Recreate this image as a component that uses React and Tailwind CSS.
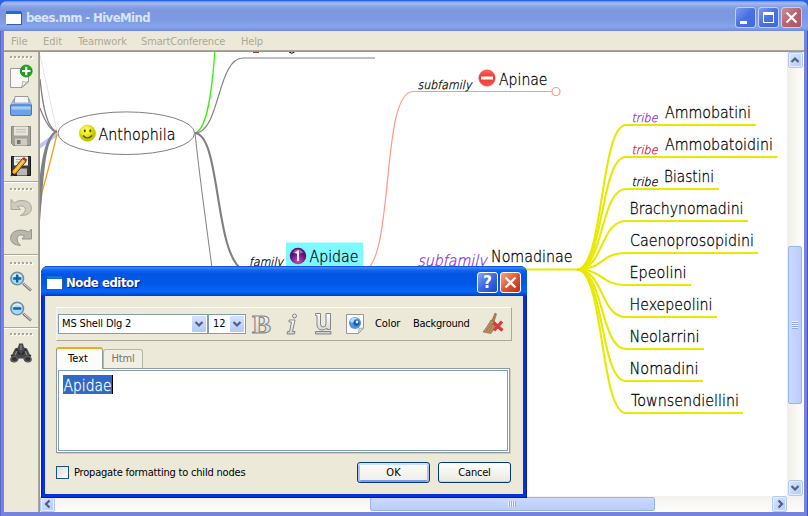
import React from "react";

const TRIBES = [
  { name: "Ammobatini", x: 665, w: 86, y: 125, end: 756, tag: "#8a2be2" },
  { name: "Ammobatoidini", x: 665, w: 108, y: 157, end: 777.5, tag: "#dc143c" },
  { name: "Biastini", x: 664, w: 50, y: 189, end: 719, tag: "#000" },
  { name: "Brachynomadini", x: 629.5, w: 114, y: 221, end: 748 },
  { name: "Caenoprosopidini", x: 630, w: 124, y: 253, end: 758 },
  { name: "Epeolini", x: 629.5, w: 57, y: 285, end: 691 },
  { name: "Hexepeolini", x: 629.5, w: 83, y: 317, end: 717 },
  { name: "Neolarrini", x: 629.5, w: 70, y: 349, end: 704 },
  { name: "Nomadini", x: 629.5, w: 69, y: 381, end: 703 },
  { name: "Townsendiellini", x: 631, w: 108, y: 413, end: 743 },
];

function Label({ x, y, w, size = 16.5, color = "#000", italic, children }) {
  return (
    <text
      x={x}
      y={y}
      fontSize={size}
      fill={color}
      stroke={color}
      strokeWidth={0.3}
      fontStyle={italic ? "italic" : "normal"}
      textLength={w}
      lengthAdjust="spacingAndGlyphs"
    >
      {children}
    </text>
  );
}

function MindMap() {
  return (
    <svg
      className="block h-[444px] w-[747px] shrink-0 font-['DejaVu_Sans_Light','DejaVu_Sans',sans-serif] [font-stretch:normal] font-extralight"
      viewBox="40 52 747 444"
    >
      <defs>
        <radialGradient id="smile" cx="40%" cy="30%">
          <stop offset="0" stopColor="#ffff70" />
          <stop offset="0.7" stopColor="#e8e810" />
          <stop offset="1" stopColor="#c4c400" />
        </radialGradient>
        <radialGradient id="info" cx="50%" cy="80%">
          <stop offset="0" stopColor="#c653c9" />
          <stop offset="1" stopColor="#5c0f78" />
        </radialGradient>
        <linearGradient id="stop" x2="0" y2="1">
          <stop offset="0" stopColor="#ff6a62" />
          <stop offset="0.45" stopColor="#e83a34" />
          <stop offset="1" stopColor="#ff5148" />
        </linearGradient>
      </defs>
      <g fill="none">
        <path d="M40 55 L57 132" stroke="#e4e4e4" />
        <path d="M40 79C43 108 47 128 57 132" stroke="#808080" strokeWidth="1.3" />
        <path d="M40 108C45 122 50 130 57 133" stroke="#808080" strokeWidth="1.2" />
        <path d="M39 147L57 134" stroke="#c3c3fd" strokeWidth="4" />
        <path d="M57 134C52 155 47 175 42 192L40 208" stroke="#f0a018" strokeWidth="1.3" />
        <path d="M57 131C44 138 43 175 39 225L39 195C41 165 45 136 57 131Z" fill="#808080" stroke="#808080" strokeWidth="1.5" />
        <ellipse cx="126.3" cy="133.2" rx="68.3" ry="21.3" fill="#fff" stroke="#808080" />
        <path d="M195 133C207 130 212 92 215 50" stroke="#3cec18" strokeWidth="1.3" />
        <path d="M195 133C220 133 217 58 243 58H375" stroke="#808080" strokeWidth="1.2" />
        <path d="M195 133C221 135 214 255 243 270" stroke="#808080" strokeWidth="2.1" />
        <path d="M195 133C199 172 207 230 212 268" stroke="#808080" />
        <path d="M366 270C394 254 381 91.5 413 91.5H551.5" stroke="#ff9a80" strokeWidth="1.2" />
        <circle cx="556" cy="91.5" r="4" stroke="#ff9a80" strokeWidth="1.2" />
        <g stroke="#e8e800" strokeWidth="2.1">
          <path d="M520 269.5H580" />
          {TRIBES.map((t) => (
            <path key={t.name} d={`M577 269.5C604 269.5 600 ${t.y} 626 ${t.y}H${t.end}`} />
          ))}
        </g>
      </g>
      {TRIBES.map((t) => (
        <g key={t.name}>
          <Label x={t.x} y={t.y - 7} w={t.w}>{t.name}</Label>
          {t.tag && (
            <Label x={631.5} y={t.y - 3} w={26} size={12} color={t.tag} italic>tribe</Label>
          )}
        </g>
      ))}
      <circle cx="87.5" cy="133.3" r="8.2" fill="url(#smile)" stroke="#c9c900" strokeWidth=".5" />
      <ellipse cx="84.8" cy="130.7" rx="1" ry="1.5" fill="#4a4a20" />
      <ellipse cx="90.4" cy="130.7" rx="1" ry="1.5" fill="#4a4a20" />
      <path d="M83 135.5Q87.5 140.5 92 135.5" fill="none" stroke="#4a4a20" strokeWidth="1.2" />
      <Label x={98.5} y={140} w={77}>Anthophila</Label>
      <rect x="286" y="242.5" width="77" height="28" fill="#7df9ff" />
      <circle cx="298" cy="256" r="8.2" fill="url(#info)" />
      <path d="M292.5 252.5Q298 246 303.5 252.5Q298 255 292.5 252.5Z" fill="#c890d4" opacity=".6" />
      <path d="M295.6 253L298 251.5V261" fill="none" stroke="#fff" strokeWidth="1.8" />
      <Label x={309.5} y={262} w={49}>Apidae</Label>
      <Label x={249} y={265.5} w={34} size={12} italic>family</Label>
      <Label x={417.5} y={88.5} w={54} size={12} italic>subfamily</Label>
      <Label x={417.5} y={265.5} w={69} size={15.5} color="#8a2be2" italic>subfamily</Label>
      <circle cx="487" cy="78" r="8.2" fill="url(#stop)" stroke="#e04038" strokeWidth=".5" />
      <rect x="481" y="76.5" width="12" height="3" fill="#fff" />
      <Label x={499} y={85} w={48.5}>Apinae</Label>
      <Label x={491} y={262} w={81.5}>Nomadinae</Label>
      <path d="M253 52.3H259" stroke="#7a3a28" strokeWidth="1.3" />
      <path d="M289 52Q292 54.5 294.5 52" fill="none" stroke="#000" />
    </svg>
  );
}

function Icon({ children }) {
  return (
    <div className="flex h-[30px] items-center justify-center">
      <svg width="24" height="24" viewBox="0 0 24 24" fill="none">{children}</svg>
    </div>
  );
}

function Handle() {
  return (
    <div className="flex h-[9px] items-center gap-px pl-[6px]">
      {[0, 1, 2, 3, 4, 5].map((i) => (
        <i key={i} className="mr-px h-[2px] w-[2px] bg-[#a8a595] shadow-[1px_1px_0_#fff]" />
      ))}
    </div>
  );
}

function Rule() {
  return <div className="h-[2px] border-b border-white bg-[#aca899]" />;
}

function Magnifier({ plus }) {
  return (
    <Icon>
      <path d="M14 13.5L22 20.5" stroke="#777" strokeWidth="2.6" />
      <path d="M14.5 13.5L21.8 20" stroke="#e8e8e8" strokeWidth="1" />
      <circle cx="8.2" cy="8.5" r="6.3" fill="#a9d8f5" stroke="#6d91a3" strokeWidth="1.6" />
      <path d="M4 6.5Q8 2 12.5 6.5" stroke="#e0f4ff" strokeWidth="1.5" />
      <path d={plus ? "M4.2 8.5H12.2M8.2 4.5V12.5" : "M4.2 8.5H12.2"} stroke="#10619f" strokeWidth="2.4" />
    </Icon>
  );
}

function ToolColumn() {
  return (
    <div className="flex w-[34px] shrink-0 flex-col bg-[#ece9d8]">
      <Handle />
      <Icon>
        <path d="M1.5 4.5H19.500V18L13 23.500H1.5Z" fill="#f8f8f8" stroke="#9b9b9b" />
        <path d="M12.5 23Q14.500 19 13.500 17.500Q16 19 19.500 17.500Z" fill="#fff" stroke="#999" strokeWidth=".8" />
        <circle cx="17.2" cy="7" r="6" fill="#18a818" stroke="#0c7c10" strokeWidth=".7" />
        <path d="M13 7H21.400M17.2 2.800V11.200" stroke="#fff" strokeWidth="2.200" />
      </Icon>
      <Icon>
        <path d="M5 10L6 2.500H19L20.500 10" fill="#f6f6f6" stroke="#999" />
        <path d="M5 5L2 10.500H22.500L20 5V9H5Z" fill="#a8c8ec" stroke="#6f9bd0" strokeWidth=".7" />
        <path d="M1.500 11H22.500V20Q22.500 21.500 21 21.500H3Q1.500 21.500 1.500 20Z" fill="#6ba4e6" stroke="#3d79c4" />
        <path d="M2.500 12.500H21.500V15.500H2.500Z" fill="#a5cbf5" />
      </Icon>
      <Icon>
        <path d="M2.500 2.500H21.500V21.500H4.500L2.500 19.500Z" fill="#a3a198" stroke="#858379" />
        <path d="M5 2.500H19V11.500H5Z" fill="#e6e4da" />
        <path d="M7 5.500H17M7 8H17" stroke="#c0beb4" />
        <path d="M6 14.500H18V21.500H6Z" fill="#ceccc2" />
        <path d="M8 16H11.500V20H8Z" fill="#77756d" />
      </Icon>
      <Icon>
        <path d="M2.500 2.500H21.500V21.500H4.500L2.500 19.500Z" fill="#3c3c3c" stroke="#151515" />
        <path d="M5 2.500H19V11.500H5Z" fill="#ececec" />
        <path d="M7 5.500H17M7 8H17" stroke="#aaa" />
        <path d="M8 14.500H18V21.500H8Z" fill="#b8b8b8" />
        <path d="M2 22L3.500 16.500L13.500 4.500L17 7.500L7 19.500Z" fill="#f2ae27" stroke="#5e3808" />
        <path d="M5.500 17.500L15.300 6" stroke="#ffe27a" />
        <path d="M13.500 4.500L15 3L18.300 5.800L17 7.500Z" fill="#c8281e" />
        <path d="M2 22L3 18.500L5.500 20.500Z" fill="#111" />
      </Icon>
      <Rule />
      <div className="pt-px"><Handle /></div>
      <Icon>
        <path d="M2 3.500V13.500H11.500L8.500 10.500Q16 8.500 16.500 13.500Q16.500 17 11.500 19.500Q22 19.500 22.500 12.500Q22 4 12 4.500Q8 4.700 5.500 6.800Z" fill="#cfccbf" stroke="#aaa79b" />
      </Icon>
      <Icon>
        <path d="M22.500 3V13H13L15.500 10Q9.500 7 8 12Q7.500 16 11.500 19.500Q2 19 1.500 12.500Q2 4 12 4Q16.500 4.200 19.500 6Z" fill="#b9b7ac" stroke="#98968c" />
      </Icon>
      <div className="pt-px"><Rule /></div>
      <div className="pt-[2px]"><Handle /></div>
      <Magnifier plus />
      <Magnifier />
      <Rule />
      <Handle />
      <Icon>
        <path d="M2 16L6 7.500L9 6.500L10 2.500H14L15 6.500L18 7.500L22 16Q24.500 21 19 21.500Q15 21.500 14.500 17.500H9.500Q9 21.500 5 21.500Q-.5 21 2 16Z" fill="#484848" />
        <path d="M2 14L9 19M22 14L15 19M7 8L11 14M17 8L13 14" stroke="#262626" strokeWidth="1.5" />
        <ellipse cx="5.2" cy="18" rx="3.200" ry="2.600" fill="#333" stroke="#6a6a6a" />
        <ellipse cx="18.8" cy="18" rx="3.200" ry="2.600" fill="#333" stroke="#6a6a6a" />
        <path d="M12 4V9M8 10L6 14M16 10L18 14" stroke="#8a8a8a" strokeWidth="1.200" />
      </Icon>
    </div>
  );
}

function WindowGlyph() {
  return (
    <div className="h-[13px] w-[15px] shrink-0 border-t-[3px] border-[#1672d8] bg-white shadow-[1px_1px_0_#3a5aa8]" />
  );
}

function Chevron({ d, color = "#4d6185" }) {
  return (
    <svg width="10" height="10" viewBox="0 0 10 10" fill="none">
      <path d={d} stroke={color} strokeWidth="2.2" />
    </svg>
  );
}

const SCROLL_BTN =
  "flex h-[16px] w-[15px] shrink-0 items-center justify-center rounded-[2px] border border-[#b4c8f6] bg-gradient-to-br from-[#dbe5fe] to-[#b3c9fb] shadow-[inset_0_0_0_1px_#e4edff]";

function Combo({ children, box, pad }) {
  return (
    <div className={`flex h-[20px] items-center border border-[#7f9db9] bg-white ${box}`}>
      <span className={`flex-1 ${pad}`}>{children}</span>
      <span className="mr-px flex h-[16px] w-[14px] items-center justify-center rounded-[1px] bg-gradient-to-b from-[#d6e2fd] to-[#b4c9f8]">
        <Chevron d="M1.5 3L5 6.5L8.500 3" />
      </span>
    </div>
  );
}

function Dialog() {
  return (
    <div className="absolute left-[41px] top-[266px] flex h-[232px] w-[486px] flex-col rounded-t-[7px] bg-[#0831d9] text-[11px] leading-[14px] text-black shadow-[inset_1px_0_0_#001ea0,inset_-1px_-1px_0_#001ea0]">
      <div className="flex h-[30px] shrink-0 items-center rounded-t-[7px] bg-[linear-gradient(#0a3fd0_0,#3c8cff_6%,#1267ee_13%,#0254e3_28%,#0457e8_60%,#0566fb_85%,#0350d8_94%,#003bc4)] pl-[6px] pr-[6px] pt-[3px]">
        <WindowGlyph />
        <b className="ml-[4px] flex-1 text-[13px] text-white tracking-[-0.45px] [text-shadow:1px_1px_1px_#0a1883]">Node editor</b>
        <span className="mr-[2px] flex h-[21px] w-[21px] items-center justify-center rounded-[3px] border border-white bg-gradient-to-br from-[#86a6f4] via-[#3c69e0] to-[#1d48cc] text-[17px] font-bold leading-none text-white">?</span>
        <span className="flex h-[21px] w-[21px] items-center justify-center rounded-[3px] border border-white bg-gradient-to-br from-[#f0a58e] via-[#e1552f] to-[#bd2e0c]">
          <svg width="13" height="13" viewBox="0 0 13 13"><path d="M1.5 1.5L11.500 11.500M11.500 1.500L1.500 11.500" stroke="#fff" strokeWidth="2.300" /></svg>
        </span>
      </div>
      <div className="mx-[4px] mb-[4px] flex flex-1 flex-col bg-[#ece9d8] pl-[11px] pr-[11px] pt-[11px]">
        <div className="flex h-[34px] items-center border border-b-[#aca899] border-l-[#f6f4ea] border-r-[#aca899] border-t-white pl-px">
          <Combo box="w-[150px]" pad="pl-[3px] tracking-[-0.15px]">MS Shell Dlg 2</Combo>
          <Combo box="w-[38px]" pad="pl-[4px]">12</Combo>
          <svg className="ml-[6px] overflow-visible" width="82" height="32" viewBox="252 308 82 32">
            <defs>
              <linearGradient id="metal" x2="0" y2="1">
                <stop offset="0" stopColor="#fff" />
                <stop offset="1" stopColor="#cfcfcf" />
              </linearGradient>
            </defs>
            <g fill="url(#metal)" stroke="#858585" strokeWidth="1">
              <text x="252" y="332.500" fontSize="26" fontWeight="bold" fontFamily="Liberation Serif, serif" textLength="19" lengthAdjust="spacingAndGlyphs">B</text>
              <path d="M287.500 331.500H289.500L291.500 322H289V320H295L292.500 331.500H295L294.500 334H287Z" />
              <circle cx="294.500" cy="316" r="2" />
              <path d="M315.500 313.500H320.500V324Q320.500 327 323 327Q326 327 326 324V313.500H330.500V329.500H327V328Q325 330 322 330Q317.500 330 317 325V315.500H315.500ZM315.500 331.500H331V334H315.500Z" />
            </g>
          </svg>
          <svg className="ml-[11px]" width="20" height="22" viewBox="0 0 20 22">
            <path d="M1.500 1.500H18.500V15L13.500 20.500H1.500Z" fill="#fbfbfb" stroke="#999" />
            <path d="M13.500 20.500L14 15.500L18.500 15Z" fill="#ddd" stroke="#999" strokeWidth=".7" />
            <circle cx="10" cy="10" r="6" fill="#4c94e4" />
            <path d="M5 7.500Q8 2.500 13 5.500Q8 6 9 9Q6 11 5 7.500Z" fill="#b4dcff" />
            <circle cx="11.500" cy="10" r="3" fill="#1c58b0" />
            <circle cx="12" cy="9" r="1.400" fill="#d8eeff" />
          </svg>
          <span className="ml-[10px] w-[38px] tracking-[-0.1px]">Color</span>
          <span className="w-[68px] whitespace-nowrap tracking-[-0.25px]">Background</span>
          <svg width="24" height="24" viewBox="0 0 24 24">
            <path d="M14 1L15.500 2L13 10L10.500 9Z" fill="#b08455" stroke="#795530" strokeWidth=".5" />
            <path d="M10 8L14.500 10.500Q14 17 10 21.500L2 20Q6 15 10 8Z" fill="#b99162" stroke="#80603c" strokeWidth=".6" />
            <path d="M10.500 11L5 20M12 11.500L8 20.500" stroke="#8a6640" strokeWidth=".6" />
            <path d="M12.500 10.500L21.500 18.500M21 9.500L13 18.500" stroke="#d93b3b" strokeWidth="3.200" />
          </svg>
        </div>
        <div className="mt-[6px] flex h-[21px] shrink-0 items-end">
          <span className="relative z-10 -mb-px flex h-[22px] w-[47px] items-center justify-center rounded-t-[3px] border-x border-t-[2px] border-x-[#919b9c] border-t-[#f5a71c] bg-[#fcfcfa] pr-[3px]">Text</span>
          <span className="flex h-[19px] w-[40px] items-center justify-center rounded-t-[3px] border border-b-0 border-[#b8b6a8] bg-[#f1efe3] tracking-[-0.2px] text-[#75736a]">Html</span>
        </div>
        <div className="h-[85px] w-[454px] shrink-0 border border-[#919b9c] bg-white p-px shadow-[1px_1px_0_#d0cebf]">
          <div className="flex h-full items-start border border-[#7f9db9] pl-[4px] pt-[4px]">
            <svg className="h-[19px] w-[50px] border-r border-black bg-[#316ac5] font-['DejaVu_Sans_Light','DejaVu_Sans',sans-serif] [font-stretch:normal] font-extralight" viewBox="0 0 49 19">
              <Label x={0.5} y={15.500} w={48} color="#fff">Apidae</Label>
            </svg>
          </div>
        </div>
        <div className="mt-[9px] flex h-[21px] w-[455px] items-center">
          <span className="mr-[5px] h-[13px] w-[13px] border border-[#1c5180] bg-gradient-to-br from-[#dcdcd7] to-white" />
          <span className="flex-1 tracking-[-0.2px]">Propagate formatting to child nodes</span>
          <span className="mr-[8px] flex h-[21px] w-[73px] items-center justify-center rounded-[3px] border border-[#003c74] bg-gradient-to-b from-[#fdfdfc] to-[#eeede5] shadow-[inset_0_2px_0_#cee0fb,inset_2px_0_0_#a9c2f0,inset_-2px_0_0_#a9c2f0,inset_0_-2px_0_#7f9ae8]">OK</span>
          <span className="flex h-[21px] w-[73px] items-center justify-center rounded-[3px] border border-[#003c74] bg-gradient-to-b from-white to-[#eae8dd] tracking-[-0.2px] shadow-[inset_0_-1px_0_#d6d0c5]">Cancel</span>
        </div>
      </div>
    </div>
  );
}

const CAPTION_BTN =
  "flex h-[21px] w-[21px] items-center justify-center rounded-[3px] border border-[#c3d0f4]";

export default function App() {
  return (
    <div className="relative flex h-[516px] w-[808px] flex-col overflow-hidden bg-[#2463ea] font-['DejaVu_Sans_Condensed','DejaVu_Sans',sans-serif] text-[11px] [font-stretch:condensed]">
      <div className="mt-px flex h-[515px] flex-col rounded-t-[7px] bg-[#7583dc] shadow-[inset_1px_0_0_#5d68cc,inset_-1px_0_0_#4a55bb]">
        <div className="flex h-[30px] shrink-0 items-center rounded-t-[7px] bg-[linear-gradient(#6f8be0_0,#a3bbee_7%,#8ba3e4_18%,#7b97e0_30%,#7d99e2_60%,#84a5ec_85%,#7b99e3_94%,#7085dc)] pl-[6px] pr-[6px] pt-[3px]">
          <WindowGlyph />
          <b className="ml-[5px] flex-1 text-[13px] tracking-[-0.6px] text-[#d8e4f8]">bees.mm - HiveMind</b>
          <div className="flex gap-[2px]">
            <span className={`${CAPTION_BTN} bg-gradient-to-br from-[#7d9bef] via-[#4970e2] to-[#3f68e6]`}>
              <i className="mr-[4px] mt-[9px] h-[3px] w-[7px] bg-white" />
            </span>
            <span className={`${CAPTION_BTN} bg-gradient-to-br from-[#7d9bef] via-[#4970e2] to-[#3f68e6]`}>
              <i className="h-[11px] w-[11px] border border-t-[3px] border-white" />
            </span>
            <span className={`${CAPTION_BTN} bg-gradient-to-br from-[#cb8f9b] via-[#b5636f] to-[#a85664]`}>
              <svg width="13" height="13" viewBox="0 0 13 13"><path d="M1.5 1.5L11.500 11.500M11.500 1.500L1.500 11.500" stroke="#fff" strokeWidth="2.200" /></svg>
            </span>
          </div>
        </div>
        <div className="mx-[4px] flex h-[481px] flex-col bg-[#ece9d8]">
          <div className="flex h-[20px] shrink-0 items-center border-b border-[#aca899] pl-[7px] pt-[3px] text-[#aca899]">
            <span className="w-[32px]">File</span>
            <span className="w-[35px]">Edit</span>
            <span className="w-[63px] tracking-[-0.15px]">Teamwork</span>
            <span className="w-[100px] tracking-[-0.15px]">SmartConference</span>
            <span className="tracking-[-0.2px]">Help</span>
          </div>
          <div className="flex h-[461px] border-t border-[#8a9aa8]">
            <ToolColumn />
            <div className="w-[2px] shrink-0 border-l border-[#aca899] bg-[#7f9db9]" />
            <div className="flex w-[764px] flex-col bg-white">
              <div className="flex h-[444px]">
                <MindMap />
                <div className="flex w-[16px] flex-col items-center bg-gradient-to-r from-[#f0efe8] to-[#fefefb]">
                  <span className={SCROLL_BTN}><Chevron d="M1.5 7L5 3.500L8.500 7" /></span>
                  <div className="mt-[178px] flex h-[158px] w-[14px] flex-col items-center justify-center gap-px rounded-[2px] border border-[#98b4ec] bg-gradient-to-r from-[#cbd9fd] to-[#bacdfb]">
                    {[0, 1, 2, 3].map((i) => (
                      <i key={i} className="h-px w-[6px] bg-[#8caae6] shadow-[0_-1px_0_#eef4ff]" />
                    ))}
                  </div>
                  <span className={`${SCROLL_BTN} mt-auto`}><Chevron d="M1.5 3L5 6.500L8.500 3" /></span>
                </div>
              </div>
              <div className="flex h-[16px] items-center bg-gradient-to-b from-[#f3f1ec] to-[#fefefb]">
                <span className={SCROLL_BTN}><Chevron d="M6.5 1.500L3 5L6.500 8.500" /></span>
                <div className="ml-[315px] flex h-[14px] w-[285px] items-center justify-center gap-px rounded-[2px] border border-[#98b4ec] bg-gradient-to-b from-[#cbd9fd] to-[#bacdfb]">
                  {[0, 1, 2, 3].map((i) => (
                    <i key={i} className="h-[6px] w-px bg-[#8caae6] shadow-[-1px_0_0_#eef4ff]" />
                  ))}
                </div>
                <span className={`${SCROLL_BTN} ml-auto mr-[17px]`}><Chevron d="M3.5 1.500L7 5L3.500 8.500" /></span>
              </div>
            </div>
          </div>
        </div>
      </div>
      <Dialog />
    </div>
  );
}
